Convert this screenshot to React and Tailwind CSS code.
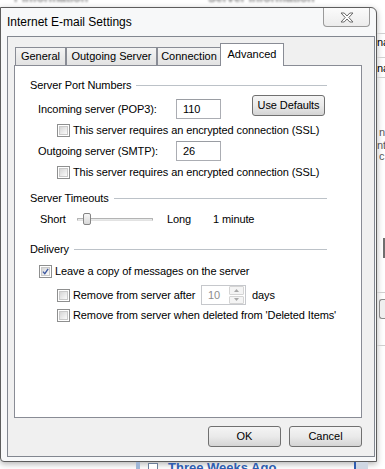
import { useState } from "react";

const font = "font-['Liberation_Sans',Arial,sans-serif]";

function Checkbox({ checked }) {
  return (
    <span className="flex h-[13px] w-[13px] shrink-0 border border-[#8e8f8f] bg-white p-[1px]">
      <span className="flex h-full w-full items-center justify-center border border-[#c9c9c9] bg-gradient-to-br from-[#d6d6d6] to-[#fbfbfb]">
        {checked ? (
          <svg width="9" height="9" viewBox="0 0 9 9">
            <path d="M1.2 4.6 L3.6 7.2 L7.9 1.2" fill="none" stroke="#3b57a0" strokeWidth="1.7" />
          </svg>
        ) : null}
      </span>
    </span>
  );
}

function CheckRow({ checked, className, children }) {
  return (
    <div className={"flex h-[13px] items-center gap-[3px] " + className}>
      <Checkbox checked={checked} />
      <span className="whitespace-nowrap">{children}</span>
    </div>
  );
}

function GroupHeader({ label, className }) {
  return (
    <div className={"flex h-[13px] items-center pl-[15px] pr-[34px] " + className}>
      <span className="whitespace-nowrap">{label}</span>
      <span className="ml-[5px] h-px flex-1 bg-[#bcc2c8]" />
    </div>
  );
}

function Button({ children, className }) {
  return (
    <button className={"flex items-center justify-center rounded-[3px] border border-[#707070] bg-gradient-to-b from-[#f4f4f4] via-[#eaeaea] to-[#d4d4d4] text-black " + className}>
      {children}
    </button>
  );
}

function Field({ value }) {
  return (
    <div className="flex h-[20px] w-[45px] items-center border border-[#abadb3] border-t-[#9a9da3] bg-white pl-[6px]">
      {value}
    </div>
  );
}

export default function App() {
  const [tab] = useState("Advanced");
  const tabs = [
    { name: "General", w: "w-[51px]" },
    { name: "Outgoing Server", w: "w-[91px]" },
    { name: "Connection", w: "w-[64px]" },
    { name: "Advanced", w: "w-[64px]" },
  ];

  return (
    <div className={"flex h-[469px] w-[385px] flex-col overflow-hidden bg-white text-[11px] leading-[13px] text-black " + font}>
      {/* what shows of the dialog behind, above the frame */}
      <div className="h-[7px] overflow-hidden">
        <div className="-mt-[8px] flex whitespace-nowrap text-[12px] font-bold text-[#8a8a8a] blur-[0.8px]">
          <span className="pl-[14px]">r Information</span>
          <span className="pl-[120px]">Server Information</span>
        </div>
      </div>

      <div className="flex h-[455px]">
        <div className="flex w-[377px] flex-col rounded-tr-[6px] rounded-bl-[4px] border border-[#5d5d5d] bg-[#f7f8f9] shadow-[0_2px_6px_rgba(0,0,0,0.3)]">
          <div className="flex h-[28px] items-start justify-between">
            <span className="self-center pl-[6px] text-[12px]">Internet E-mail Settings</span>
            <span className="mr-[6px] flex h-[19px] w-[47px] items-center justify-center rounded-b-[4px] border border-t-0 border-[#9a9a9a] bg-gradient-to-b from-[#fbfbfb] to-[#ececec]">
              <svg width="14" height="11" viewBox="0 0 14 11">
                <polygon
                  points="1,1 4.2,1 7,4 9.8,1 13,1 8.8,5.5 13,10 9.8,10 7,7 4.2,10 1,10 5.2,5.5"
                  fill="#ffffff"
                  stroke="#6a6a6a"
                  strokeWidth="1"
                  strokeLinejoin="round"
                />
              </svg>
            </span>
          </div>

          <div className="ml-[6px] mr-[1px] flex h-[421px] flex-col border border-[#828790] bg-[#f0f0f0] pl-[6px] pt-[6px]">
            <div className="flex h-[22px] items-end pl-[1px]">
              {tabs.map((t) =>
                t.name === tab ? (
                  <div
                    key={t.name}
                    className={"relative z-10 -mb-px -ml-px flex h-[23px] items-start justify-center border border-b-0 border-[#898c95] bg-white pt-[4px] " + t.w}
                  >
                    {t.name}
                  </div>
                ) : (
                  <div
                    key={t.name}
                    className={"flex h-[18px] items-center justify-center border border-b-0 border-[#898c95] bg-gradient-to-b from-[#f4f4f4] to-[#e2e2e2] " + t.w}
                  >
                    {t.name}
                  </div>
                )
              )}
            </div>

            <div className="flex h-[353px] w-[348px] flex-col border border-[#898c95] bg-white tracking-[-0.1px]">
              <GroupHeader label="Server Port Numbers" className="mt-[13px]" />

              <div className="mt-[3px] flex h-[24px] items-start pl-[23px]">
                <span className="mt-[8px] w-[138px] whitespace-nowrap">Incoming server (POP3):</span>
                <div className="mt-[4px]">
                  <Field value="110" />
                </div>
                <Button className="ml-[31px] h-[21px] w-[73px]">Use Defaults</Button>
              </div>

              <CheckRow className="mt-[5px] pl-[42px]">
                This server requires an encrypted connection (SSL)
              </CheckRow>

              <div className="mt-[4px] flex h-[20px] items-center pl-[23px]">
                <span className="w-[138px] whitespace-nowrap">Outgoing server (SMTP):</span>
                <Field value="26" />
              </div>

              <CheckRow className="mt-[5px] pl-[42px]">
                This server requires an encrypted connection (SSL)
              </CheckRow>

              <GroupHeader label="Server Timeouts" className="mt-[13px]" />

              <div className="mt-[7px] flex h-[14px] items-center pl-[25px]">
                <span className="w-[37px]">Short</span>
                <div className="relative flex h-[14px] w-[76px] items-center">
                  <div className="h-[3px] w-full rounded-[1px] border border-[#b3b3b3] border-b-[#e2e2e2] bg-[#e8eaea]" />
                  <div className="absolute left-[6px] top-[1px] h-[12px] w-[8px] rounded-[2px] border border-[#858585] bg-gradient-to-b from-[#f7f7f7] to-[#d8d8d8]" />
                </div>
                <span className="ml-[14px] w-[46px]">Long</span>
                <span>1 minute</span>
              </div>

              <GroupHeader label="Delivery" className="mt-[17px]" />

              <CheckRow checked className="mt-[9px] pl-[24px]">
                Leave a copy of messages on the server
              </CheckRow>

              <div className="mt-[7px] flex h-[20px] items-center pl-[42px]">
                <Checkbox />
                <span className="ml-[3px] w-[128px] whitespace-nowrap">Remove from server after</span>
                <div className="flex h-[20px] w-[45px] items-center border border-[#c6c8cc] bg-white pl-[6px] text-[#8d8d8d]">
                  <span className="flex-1">10</span>
                  <div className="mr-[1px] flex h-[18px] w-[15px] flex-col gap-px">
                    <div className="flex flex-1 items-center justify-center rounded-[1px] border border-[#d4d4d4] bg-[#f4f4f4]">
                      <svg width="5" height="3" viewBox="0 0 5 3">
                        <polygon points="0,3 2.5,0 5,3" fill="#a8a8a8" />
                      </svg>
                    </div>
                    <div className="flex flex-1 items-center justify-center rounded-[1px] border border-[#d4d4d4] bg-[#f4f4f4]">
                      <svg width="5" height="3" viewBox="0 0 5 3">
                        <polygon points="0,0 5,0 2.5,3" fill="#a8a8a8" />
                      </svg>
                    </div>
                  </div>
                </div>
                <span className="ml-[6px]">days</span>
              </div>

              <CheckRow className="mt-[4px] pl-[42px]">
                Remove from server when deleted from 'Deleted Items'
              </CheckRow>
            </div>

            <div className="mt-[8px] flex w-[348px] justify-end gap-[8px]">
              <Button className="h-[21px] w-[73px]">OK</Button>
              <Button className="h-[21px] w-[73px]">Cancel</Button>
            </div>
          </div>
        </div>

        {/* slice of the window behind, right of the dialog */}
        <div className="flex w-[8px] flex-col overflow-hidden">
          <div className="mt-[26px] h-px bg-[#d0d0d0]" />
          <span className="mt-[2px] whitespace-nowrap">na</span>
          <div className="mt-[8px] h-px bg-[#d0d0d0]" />
          <span className="mt-[4px] whitespace-nowrap">na</span>
          <div className="mt-[2px] h-px bg-[#d0d0d0]" />
          <span className="mt-[49px] whitespace-nowrap pl-[2px] leading-[11px] text-[#555]">n</span>
          <span className="mt-[2px] whitespace-nowrap leading-[11px] text-[#555]">nt</span>
          <span className="whitespace-nowrap pl-[2px] leading-[11px] text-[#555]">c</span>
          <div className="ml-[6px] mt-[76px] h-[20px] w-[2px] bg-[#6f6f6f]" />
          <div className="mt-[34px] h-px bg-[#cfcfcf]" />
          <div className="ml-[2px] mt-[6px] h-[20px] rounded-l-[3px] border border-r-0 border-[#8a8a8a] bg-[#efefef]" />
          <div className="mt-[26px] h-px bg-[#cfcfcf]" />
        </div>
      </div>

      {/* what shows of the dialog behind, below the frame */}
      <div className="flex h-[7px] items-start overflow-hidden pl-[136px]">
        <span className="h-[7px] w-[4px] bg-[#9fb6d6]" />
        <span className="ml-[8px] mt-[1px] h-[7px] w-[10px] border border-[#6d7f99] bg-white" />
        <span className="ml-[10px] -mt-[1px] whitespace-nowrap text-[13px] font-bold leading-[13px] text-[#2f5db0]">
          Three Weeks Ago
        </span>
        <span className="ml-[78px] h-[7px] w-[14px] border-l-2 border-[#2f5db0] bg-[#cfd7e3]" />
      </div>
    </div>
  );
}
